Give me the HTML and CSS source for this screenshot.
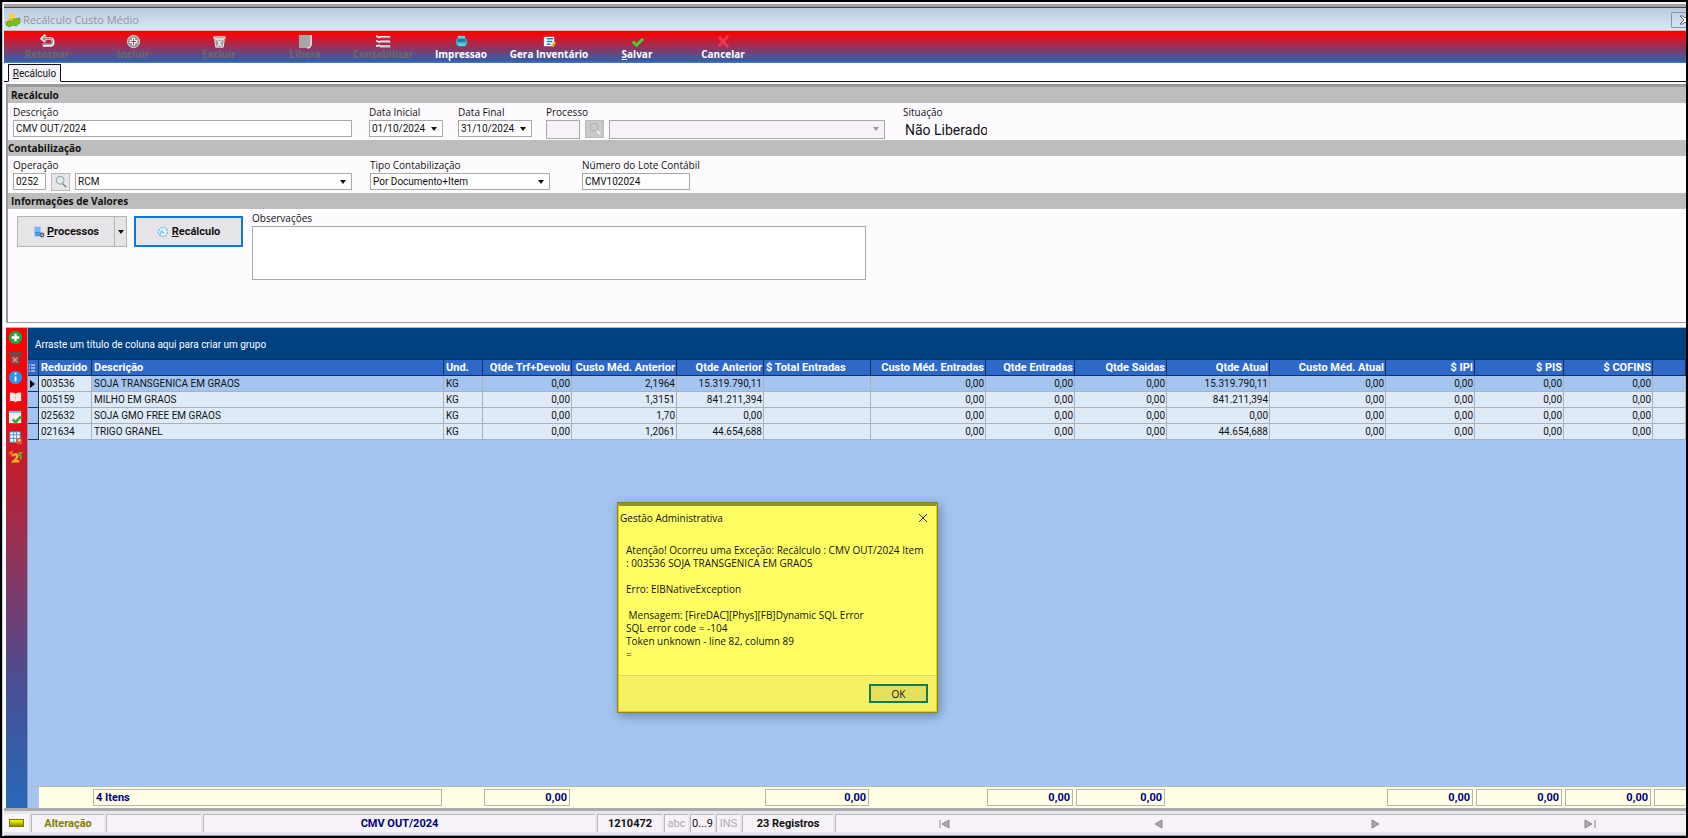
FILE: index.html
```html
<!DOCTYPE html>
<html lang="pt-BR">
<head>
<meta charset="utf-8">
<title>Recálculo Custo Médio</title>
<link rel="stylesheet" href="styles.css">
</head>
<body>
<main class="window">
  <header class="titlebar">
    <svg class="app-icon" viewBox="0 0 16 16"><circle cx="7" cy="4" r="3" fill="#f5cf45"/><path d="M2 9q1-3 5-3t5 3l-2 4H4z" fill="#f3b62c"/><path d="M1 10l4-1 3 1 1-3 6-1v5l-4 3-3-1-4 2-3-2z" fill="#79bd1f" stroke="#548f16" stroke-width=".6"/></svg>
    <h1>Recálculo Custo Médio</h1>
    <button class="close" aria-label="Fechar"><svg viewBox="0 0 12 10"><path d="M1 1l4 4-4 4h3l2-2 2 2h3L8 5l3-4H8L6 3 4 1z" fill="#fff" stroke="#596579"/></svg></button>
  </header>

  <nav class="toolbar">
    <button class="tool" disabled><svg viewBox="0 0 16 16"><path d="M6 1L2 5l4 3M2 5h9q3 0 3 3.500T11 12H3" fill="none" stroke="#eee" stroke-width="3"/><path d="M6 2L3 5l3 2M3 5h8q2 0 2 3t-2 3H3" fill="none" stroke="#999" stroke-width="1.500"/></svg>Retornar</button>
    <button class="tool" disabled><svg viewBox="0 0 16 16"><circle cx="8" cy="8" r="6.500" fill="#999" stroke="#ddd"/><path d="M8 4v8M4 8h8" stroke="#fff" stroke-width="3"/><path d="M8 5v6M5 8h6" stroke="#8b3b52"/></svg>Incluir</button>
    <button class="tool" disabled><svg viewBox="0 0 16 16"><path d="M2 3h12v2H2zM3 6h10l-1 8H4z" fill="#999" stroke="#eee"/><path d="M6 7l4 6M10 7l-4 6" stroke="#eee" stroke-width="1.500"/></svg>Excluir</button>
    <button class="tool" disabled><svg viewBox="0 0 16 16"><path d="M1 1h13v10l-4 4H1z" fill="#a5a5a5"/><path d="M14 1v9q0 4-4 5" fill="none" stroke="#eee" stroke-width="1.500"/></svg>Libera</button>
    <button class="tool narrow" disabled><svg viewBox="0 0 16 16"><path d="M4 3h11M4 8h11M4 13h11M0 2l4 2M0 7l4 2M0 13l4-1" stroke="#eee" stroke-width="2"/><path d="M5 4h11M5 9h11M5 14h11" stroke="#999"/></svg>Contabilizar</button>
    <button class="tool"><svg viewBox="0 0 16 16"><path d="M4 2h8v4H4z" fill="#56d3e4"/><rect x="2" y="5" width="12" height="7" rx="1.500" fill="#3ba7ce"/><path d="M4 5h8v3H4z" fill="#26738e"/><path d="M4 10h8v3H4z" fill="#4fdaeb"/></svg>Impressao</button>
    <button class="tool wide"><svg viewBox="0 0 16 16"><path d="M2 3h11v10H2z" fill="#fff"/><path d="M5 5h7M5 8h6M5 11h4" stroke="#2476c7" stroke-width="1.500"/><path d="M9 13l4-5 2 1-3 5z" fill="#f4a62a"/></svg>Gera Inventário</button>
    <button class="tool"><svg viewBox="0 0 16 16"><path d="M3 8l4 4 7-7" fill="none" stroke="#46d12c" stroke-width="3"/></svg><span><u>S</u>alvar</span></button>
    <button class="tool"><svg viewBox="0 0 16 16"><path d="M3 3l10 11M13 2L3 13" fill="none" stroke="#f0384c" stroke-width="3"/></svg>Cancelar</button>
  </nav>

  <div class="tabs"><button class="tab"><u>R</u>ecálculo</button></div>

  <form class="panel">
    <h2>Recálculo</h2>
    <div class="row first">
      <div class="field"><label for="desc">Descrição</label><input id="desc" class="box full" value="CMV OUT/2024"></div>
      <div class="field"><label for="ini">Data Inicial</label><div class="box date"><input id="ini" value="01/10/2024"><button type="button" class="drop" aria-label="Abrir calendário inicial"></button></div></div>
      <div class="field"><label for="fim">Data Final</label><div class="box date"><input id="fim" value="31/10/2024"><button type="button" class="drop" aria-label="Abrir calendário final"></button></div></div>
      <div class="field"><label for="proc">Processo</label>
        <div class="group"><input id="proc" class="box code tall" disabled><button type="button" class="search off" disabled aria-label="Buscar processo"><svg viewBox="0 0 16 16"><circle cx="7" cy="6" r="4.500" fill="#ccc" stroke="#aaa"/><path d="M10 10l4 4" stroke="#f2f2f2" stroke-width="2"/></svg></button><span class="pick grow"><select class="box tall" disabled aria-label="Nome do processo"><option></option></select></span></div>
      </div>
      <div class="field"><span class="label">Situação</span><output class="status-text">Não Liberado</output></div>
    </div>
    <h2 class="flush">Contabilização</h2>
    <div class="row second">
      <div class="field"><label for="oper">Operação</label>
        <div class="group oper"><input id="oper" class="box short" value="0252"><button type="button" class="search" aria-label="Buscar operação"><svg viewBox="0 0 16 16"><circle cx="7" cy="6" r="4.500" fill="#dcebeb" stroke="#87979a"/><path d="M10 10l4 4" stroke="#777" stroke-width="1.500"/></svg></button><span class="pick grow"><select class="box" aria-label="Nome da operação"><option>RCM</option></select></span></div>
      </div>
      <div class="field"><label for="tipo">Tipo Contabilização</label><span class="pick tipo"><select id="tipo" class="box"><option>Por Documento+Item</option></select></span></div>
      <div class="field"><label for="lote">Número do Lote Contábil</label><input id="lote" class="box lote" value="CMV102024"></div>
    </div>
    <h2>Informações de Valores</h2>
    <div class="values">
      <div class="split"><button type="button" class="action"><svg viewBox="0 0 16 16"><path d="M2 1h8v13H2z" fill="#71b9f0"/><path d="M3 9h7M3 12h6" stroke="#1879cf" stroke-width="1.500"/><circle cx="12" cy="12" r="2.500" fill="#aaa" stroke="#4a5c6b" stroke-width="1.500"/></svg><span><u>P</u>rocessos</span></button><button type="button" class="drop" aria-label="Mais processos"></button></div>
      <button type="button" class="action focus"><svg viewBox="0 0 16 16"><circle cx="8" cy="8" r="6" fill="#e9f7ff" stroke="#5cb9ef" stroke-width="1.500" stroke-dasharray="3 1"/><path d="M7 5v4h3M5 7v4" fill="none" stroke="#3899dc"/></svg><span><u>R</u>ecálculo</span></button>
      <div class="field obs"><label for="obs">Observações</label><textarea id="obs" class="box"></textarea></div>
    </div>
  </form>

  <section class="workspace">
    <aside class="side">
      <button aria-label="Adicionar"><svg viewBox="0 0 16 16"><circle cx="8" cy="8" r="7" fill="#20a34a"/><path d="M8 4v8M4 8h8" stroke="#fff" stroke-width="2.500"/></svg></button>
      <button aria-label="Excluir"><svg viewBox="0 0 16 16"><path d="M1 2h14v3H1z" fill="#6b4a4a"/><path d="M3 6h10l-1 9H4z" fill="#a04040" stroke="#6b4a4a" stroke-width="1.500"/><path d="M5 8l5 5M10 8l-5 5" stroke="#e09090" stroke-width="1.500"/></svg></button>
      <button aria-label="Informações"><svg viewBox="0 0 16 16"><circle cx="8" cy="8" r="7" fill="#2795ee"/><path d="M8 3v2M8 7v5" stroke="#fff" stroke-width="2"/></svg></button>
      <button aria-label="Catálogo"><svg viewBox="0 0 16 16"><path d="M2 3q3-1 6 1 3-2 6-1v9q-4-1-6 1-2-2-6-1z" fill="#f4e8e8"/><path d="M8 4v9" stroke="#e8c8c8"/></svg></button>
      <button aria-label="Conferir"><svg viewBox="0 0 16 16"><path d="M1 1h13v13H1z" fill="#f5f5f5"/><path d="M1 2h13" stroke="#79b6dd" stroke-width="2"/><path d="M5 10l3 3 6-6" fill="none" stroke="#3aa935" stroke-width="3"/></svg></button>
      <button aria-label="Planilha"><svg viewBox="0 0 16 16"><path d="M2 2h11v11H2z" fill="#fff" stroke="#3797dd"/><path d="M2 5h11M2 9h11M6 2v11M9 2v11" stroke="#3797dd"/><path d="M9 9h6v6H9z" fill="#e9532d"/><path d="M11 10h2v2h-2z" fill="#fff"/></svg></button>
      <button aria-label="Ordenar"><svg viewBox="0 0 16 16"><path d="M1 4l3-2v5" fill="none" stroke="#ff6a22" stroke-width="2"/><path d="M5 6q4-3 5 0 0 2-4 6h6" fill="none" stroke="#ffb51f" stroke-width="2.500"/><path d="M11 3h3l-2 3q3 0 1 4" fill="none" stroke="#62ad25" stroke-width="2"/></svg></button>
    </aside>
    <div class="grid">
      <p class="group-bar">Arraste um título de coluna aqui para criar um grupo</p>
      <table class="data">
        <colgroup><col class="c11"><col class="c53"><col class="c352"><col class="c39"><col class="c89"><col class="c105"><col class="c87"><col class="c107"><col class="c115"><col class="c89"><col class="c92"><col class="c103"><col class="c116"><col class="c89"><col class="c89"><col class="c89"><col></colgroup>
        <thead><tr><th><svg class="mark" viewBox="0 0 8 10"><path d="M1 2h1M3 2h4M1 5h1M3 5h4M1 8h1M3 8h4" stroke="#fff"/></svg></th><th class="l">Reduzido</th><th class="l">Descrição</th><th class="l">Und.</th><th>Qtde Trf+Devolu</th><th>Custo Méd. Anterior</th><th>Qtde Anterior</th><th class="l">$ Total Entradas</th><th>Custo Méd. Entradas</th><th>Qtde Entradas</th><th>Qtde Saidas</th><th>Qtde Atual</th><th>Custo Méd. Atual</th><th>$ IPI</th><th>$ PIS</th><th>$ COFINS</th><th></th></tr></thead>
        <tbody>
          <tr class="current"><td class="ind"><svg class="mark" viewBox="0 0 8 10"><path d="M2 1l5 4-5 4z" fill="#000"/></svg></td><td class="l id">003536</td><td class="l">SOJA TRANSGENICA EM GRAOS</td><td class="l">KG</td><td>0,00</td><td>2,1964</td><td>15.319.790,11</td><td></td><td>0,00</td><td>0,00</td><td>0,00</td><td>15.319.790,11</td><td>0,00</td><td>0,00</td><td>0,00</td><td>0,00</td><td></td></tr>
          <tr><td class="ind"></td><td class="l">005159</td><td class="l">MILHO EM GRAOS</td><td class="l">KG</td><td>0,00</td><td>1,3151</td><td>841.211,394</td><td></td><td>0,00</td><td>0,00</td><td>0,00</td><td>841.211,394</td><td>0,00</td><td>0,00</td><td>0,00</td><td>0,00</td><td></td></tr>
          <tr><td class="ind"></td><td class="l">025632</td><td class="l">SOJA GMO FREE EM GRAOS</td><td class="l">KG</td><td>0,00</td><td>1,70</td><td>0,00</td><td></td><td>0,00</td><td>0,00</td><td>0,00</td><td>0,00</td><td>0,00</td><td>0,00</td><td>0,00</td><td>0,00</td><td></td></tr>
          <tr><td class="ind"></td><td class="l">021634</td><td class="l">TRIGO GRANEL</td><td class="l">KG</td><td>0,00</td><td>1,2061</td><td>44.654,688</td><td></td><td>0,00</td><td>0,00</td><td>0,00</td><td>44.654,688</td><td>0,00</td><td>0,00</td><td>0,00</td><td>0,00</td><td></td></tr>
        </tbody>
      </table>
      <table class="totals">
        <colgroup><col class="c11"><col class="c53"><col class="c352"><col class="c39"><col class="c89"><col class="c105"><col class="c87"><col class="c107"><col class="c115"><col class="c89"><col class="c92"><col class="c103"><col class="c116"><col class="c89"><col class="c89"><col class="c89"><col></colgroup>
        <tbody><tr><td class="ind"></td><td></td><td class="l"><div class="sum">4 Itens</div></td><td></td><td><div class="sum">0,00</div></td><td></td><td></td><td><div class="sum">0,00</div></td><td></td><td><div class="sum">0,00</div></td><td><div class="sum">0,00</div></td><td></td><td></td><td><div class="sum">0,00</div></td><td><div class="sum">0,00</div></td><td><div class="sum">0,00</div></td><td class="last"><div class="sum"></div></td></tr></tbody>
      </table>
    </div>
  </section>

  <footer class="statusbar">
    <button class="led" aria-label="Estado"><span></span></button>
    <span class="cell mode">Alteração</span>
    <span class="cell blank"></span>
    <span class="cell doc">CMV OUT/2024</span>
    <span class="cell number">1210472</span>
    <span class="cell key dim">abc</span>
    <span class="cell key">0...9</span>
    <span class="cell key dim">INS</span>
    <span class="cell count">23 Registros</span>
    <nav class="cell pager">
      <button aria-label="Primeiro"><svg viewBox="0 0 12 10"><path d="M2 1v8M11 1v8L4 5z" fill="#aaa" stroke="#888"/></svg></button>
      <button aria-label="Anterior"><svg viewBox="0 0 12 10"><path d="M9 1v8L2 5z" fill="#aaa" stroke="#888"/></svg></button>
      <button aria-label="Próximo"><svg viewBox="0 0 12 10"><path d="M3 1v8l7-4z" fill="#aaa" stroke="#888"/></svg></button>
      <button aria-label="Último"><svg viewBox="0 0 12 10"><path d="M1 1v8l7-4zM11 1v8" fill="#aaa" stroke="#888"/></svg></button>
    </nav>
  </footer>

  <section class="dialog" role="dialog" aria-labelledby="dlg-title">
    <header><h2 id="dlg-title">Gestão Administrativa</h2><button aria-label="Fechar mensagem"><svg viewBox="0 0 10 10"><path d="M1 1l8 8M9 1L1 9" stroke="#333"/></svg></button></header>
    <p class="message">Atenção! Ocorreu uma Exceção: Recálculo : CMV OUT/2024 Item
: 003536 SOJA TRANSGENICA EM GRAOS

Erro: EIBNativeException

 Mensagem: [FireDAC][Phys][FB]Dynamic SQL Error
SQL error code = -104
Token unknown - line 82, column 89
=</p>
    <footer><button class="ok">OK</button></footer>
  </section>
</main>
</body>
</html>
```
FILE: styles.css
```css
* { box-sizing: border-box; }
body {
  margin: 0;
  background: #000;
  color: #111;
  font: 10px/14px "Open Sans", "Noto Sans", sans-serif;
}
h1, h2, p { margin: 0; font-size: inherit; }
button, input, select, textarea { font: inherit; color: inherit; margin: 0; padding: 0; border: 0; border-radius: 0; background: none; }
svg { display: block; flex: none; }

.window {
  position: relative;
  display: flex;
  flex-direction: column;
  min-height: 100vh;
  border: 2px solid #000;
  padding-left: 2px;
  background: #fff;
  box-shadow: inset 1px 0 #b9c9e2;
  overflow: hidden;
}

.titlebar {
  display: flex;
  align-items: center;
  height: 29px;
  padding-top: 6px;
  background: linear-gradient(#f0f0f0 2px, #a2a2a2 2px, #a2a2a2 5px, #444 5px, #444 6px, #bccbdc 6px, #dae7f7 28px, #cbb4c4 28px);
  color: #8e959e;
}
.app-icon { width: 16px; height: 16px; margin: 0 2px 0 1px; }
.titlebar h1 { font-size: 11px; font-weight: 400; flex: 1; }
.close { width: 15px; height: 16px; padding-left: 7px; border: 1px solid #8794ad; border-right: 0; border-radius: 2px 0 0 2px; overflow: hidden; }
.close svg { width: 12px; height: 10px; }

.toolbar {
  display: flex;
  height: 32px;
  background: linear-gradient(#f00 2px, #e01020 6px, #325faa 30px, #4b79c5);
}
.tool {
  display: flex;
  flex-direction: column;
  align-items: center;
  width: 86px;
  padding-top: 3px;
  color: #fff;
  font-weight: 700;
  line-height: 10px;
  white-space: nowrap;
}
.tool:disabled { color: #6c6868; }
.tool.narrow { width: 70px; }
.tool.wide { width: 90px; }
.tool svg { width: 15px; height: 15px; }

.tabs { display: flex; align-items: flex-end; height: 19px; padding-left: 4px; border-bottom: 1px solid #111; }
.tab {
  width: 53px;
  height: 18px;
  margin-bottom: -1px;
  border: 1px solid #111;
  border-bottom-color: #f6f3f8;
  background: #f6f3f8;
  font: 10px/18px Roboto, sans-serif;
}

.panel {
  margin: 2px 0 0 2px;
  border: 2px solid #999;
  border-width: 3px 0 1px 2px;
  background: #fefbff;
  height: 239px;
}
.panel h2 {
  height: 16px;
  padding-left: 3px;
  background: #bdbdbd;
  font-weight: 700;
  line-height: 16px;
}
.panel h2.flush { padding-left: 0; }
.row { display: grid; height: 37px; padding: 2px 0 0 5px; }
.row.first { grid-template-columns: 356px 89px 88px 357px 1fr; }
.row.second { grid-template-columns: 357px 212px 1fr; }
.field { display: flex; flex-direction: column; align-items: flex-start; }
.field label, .label { height: 15px; white-space: nowrap; }
.box {
  height: 17px;
  padding: 0 2px;
  border: 1px solid #a9a9a9;
  background: #fff;
  font: 10px/15px Roboto, sans-serif;
}
.box.tall { height: 19px; }
.box:disabled { background: #f6f2f7; }
.full { width: 339px; }
.date { display: flex; width: 74px; padding-right: 0; }
.date input { flex: 1; min-width: 0; }
.drop { display: grid; place-items: center; width: 16px; }
.drop::after, .pick::after { content: ""; border: 3px solid transparent; border-top: 4px solid #111; border-bottom: 0; }
.group { display: flex; gap: 5px; width: 339px; }
.code { width: 34px; }
.short { width: 33px; }
.search { display: grid; place-items: center; width: 19px; height: 18px; border: 1px solid #bbb; background: #e8e6e8; }
.search.off { background: #c9c9c9; }
.search svg { width: 14px; height: 14px; }
.pick { position: relative; display: block; }
.pick select { width: 100%; appearance: none; opacity: 1; }
.pick::after { position: absolute; right: 6px; top: 7px; pointer-events: none; }
.pick:has(:disabled)::after { border-top-color: #999; }
.grow { flex: 1; }
.tipo { width: 180px; }
.lote { width: 108px; }
.status-text { width: 84px; padding-left: 2px; overflow: hidden; white-space: nowrap; font: 14px/20px Roboto, sans-serif; }

.values { display: flex; align-items: flex-start; padding: 1px 0 0 9px; }
.split { display: flex; width: 110px; height: 31px; margin: 6px 7px 0 0; border: 1px solid #b5b5b5; background: #e7e4e8; }
.action { display: flex; align-items: center; justify-content: center; gap: 2px; flex: 1; font: 700 11px/14px Roboto, sans-serif; }
.action svg { width: 12px; height: 12px; }
.split .drop { width: 12px; border-left: 1px solid #b5b5b5; }
.action.focus { flex: none; width: 109px; height: 31px; margin: 6px 9px 0 0; gap: 3px; border: 2px solid #0a79d8; background: #e7e4e8; }
.obs { padding-top: 1px; }
.obs textarea { display: block; width: 614px; height: 54px; resize: none; }

.workspace { display: flex; flex: 1; margin: 4px 0 0 2px; border-top: 1px solid #a9b8c9; }
.side {
  display: flex;
  flex-direction: column;
  gap: 5px;
  width: 21px;
  padding: 2px 0 0 2px;
  background: linear-gradient(#f00 0, #fb0208 60px, #c02030 140px, #474f96 360px, #2868b8 100%);
}
.side button { height: 15px; }
.side svg { width: 15px; height: 15px; }
.grid { display: flex; flex-direction: column; flex: 1; border-left: 1px solid #8a9cb4; background: #a4c5ef; font: 10px/14px Roboto, sans-serif; }
.group-bar { padding: 10px 7px 7px; background: #004182; color: #fff; }
table { width: 100%; table-layout: fixed; border-collapse: separate; border-spacing: 0; }
.c11 { width: 11px; } .c39 { width: 39px; } .c53 { width: 53px; } .c87 { width: 87px; }
.c89 { width: 89px; } .c92 { width: 92px; } .c103 { width: 103px; } .c105 { width: 105px; }
.c107 { width: 107px; } .c115 { width: 115px; } .c116 { width: 116px; } .c352 { width: 352px; }
th, td { padding: 0 1px 0 2px; text-align: right; white-space: nowrap; overflow: hidden; }
.l { text-align: left; }
.data th { height: 17px; border: 1px solid #102f62; border-left: 0; background: #2f69c8; color: #fff; font-size: 11px; font-weight: 700; }
.data td { height: 16px; border: 1px solid #acb0b8; border-width: 0 1px 1px 0; background: #deeaf7; }
.data .current td { background: #a4c5ef; }
.data .current .id { background: #deeaf7; }
.data .ind { border-color: #14305c; background: #a4c5ef; }
.data th:first-child, .ind { padding: 0; }
.mark { width: 8px; height: 10px; }
.totals { margin-top: auto; border-top: 1px solid #b8b8b0; background: #ffffe6; color: #00007c; font-size: 11px; font-weight: 700; }
.totals td { height: 21px; padding: 0 2px 0 1px; }
.totals .ind { background: #a4c5ef; }
.sum { height: 17px; padding: 0 2px; border: 1px solid #b5b5ac; line-height: 15px; }
.totals .last { padding-right: 0; }
.last .sum { border-right: 0; }

.statusbar {
  display: flex;
  gap: 2px;
  height: 28px;
  padding: 3px 0;
  border-top: 3px solid #aaa;
  border-bottom: 1px solid #8e9aaa;
  background: #e8e6ea;
  font: 700 11px/18px Roboto, sans-serif;
}
.led { display: grid; place-items: center; width: 25px; background: #f8f6fa; }
.led span { width: 15px; height: 8px; border: 1px solid #777700; background: linear-gradient(#ff0, #8b8b00); }
.cell { border: 1px solid #b9b7bb; border-width: 1px 0 0 1px; background: #f6f2f7; text-align: center; white-space: nowrap; }
.mode { width: 73px; color: #808000; }
.blank { width: 95px; }
.doc { width: 392px; color: #00007c; }
.number { width: 65px; }
.key { width: 24px; font-weight: 400; }
.dim { color: #aaa; }
.count { width: 91px; }
.pager { display: grid; grid-template-columns: repeat(4, 1fr); flex: 1; margin-right: -12px; }
.pager button { display: grid; place-items: center; }
.pager svg { width: 12px; height: 10px; }

.dialog {
  position: absolute;
  left: 615px;
  top: 500px;
  width: 321px;
  border: 2px solid #f4c800;
  border-top: 4px solid #8f951e;
  outline: 1px solid #8a8420;
  outline-offset: -1px;
  background: #ffff64;
  box-shadow: 2px 3px 10px #3c5a8a99;
  font-size: 10px;
}
.dialog header { display: flex; justify-content: space-between; align-items: center; height: 23px; padding: 0 8px 0 1px; }
.dialog h2 { font-weight: 400; }
.dialog svg { width: 10px; height: 10px; }
.message { height: 146px; padding: 15px 0 0 7px; white-space: pre; line-height: 13px; }
.dialog footer { display: flex; justify-content: flex-end; padding: 8px; border-top: 1px solid #ddd765; background: #f6f064; }
.ok { width: 59px; height: 19px; border: 2px solid #107c54; background: #e5df5c; }
```
